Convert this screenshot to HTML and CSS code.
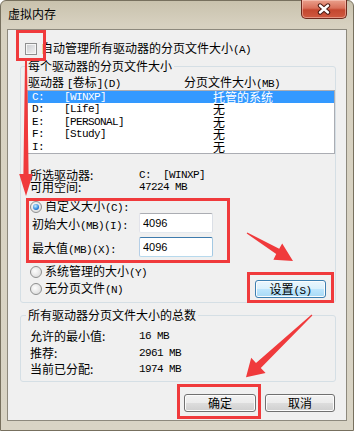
FILE: index.html
```html
<!DOCTYPE html>
<html lang="zh-CN">
<head>
    <meta charset="UTF-8">
    <meta name="viewport" content="width=device-width, initial-scale=1.0">
    <title>虚拟内存</title>

    <link rel="stylesheet" href="styles.css">
</head>
<body>
    <div class="window">
        <div class="titlebar">
            <span class="title">虚拟内存</span>
            <button class="close" title="关闭">
                <svg width="16" height="12" viewBox="0 0 16 12">
                    <path d="M4 2.5 L12 9.5 M12 2.5 L4 9.5" stroke="#4a1a12" stroke-width="4.4" stroke-linecap="round"/>
                    <path d="M4 2.5 L12 9.5 M12 2.5 L4 9.5" stroke="#fff" stroke-width="2.4" stroke-linecap="round"/>
                </svg>
            </button>
        </div>

        <div class="client">
            <label class="auto-row">
                <span class="checkbox"></span>
                <span>自动管理所有驱动器的分页文件大小<span class="en">(A)</span></span>
            </label>

            <fieldset class="group group-drive">
                <legend>每个驱动器的分页文件大小</legend>

                <div class="list-head">
                    <span class="col-drive">驱动器 <span class="en">[</span>卷标<span class="en">](D)</span></span>
                    <span>分页文件大小<span class="en">(MB)</span></span>
                </div>

                <ul class="drive-list">
                    <li class="selected"><span class="c-letter">C:</span><span class="c-label">[WINXP]</span><span>托管的系统</span></li>
                    <li><span class="c-letter">D:</span><span class="c-label">[Life]</span><span>无</span></li>
                    <li><span class="c-letter">E:</span><span class="c-label">[PERSONAL]</span><span>无</span></li>
                    <li><span class="c-letter">F:</span><span class="c-label">[Study]</span><span>无</span></li>
                    <li><span class="c-letter">I:</span><span class="c-label"></span><span>无</span></li>
                </ul>

                <div class="info-row first">
                    <span class="info-key">所选驱动器:</span>
                    <span class="en">C:  [WINXP]</span>
                </div>
                <div class="info-row">
                    <span class="info-key">可用空间:</span>
                    <span class="en">47224 MB</span>
                </div>

                <label class="radio-row custom-row">
                    <span class="radio checked"></span>
                    <span>自定义大小<span class="en">(C):</span></span>
                </label>
                <div class="size-row">
                    <span class="size-label">初始大小<span class="en">(MB)(I):</span></span>
                    <input class="size-input" type="text" value="4096">
                </div>
                <div class="size-row second">
                    <span class="size-label">最大值<span class="en">(MB)(X):</span></span>
                    <input class="size-input focus" type="text" value="4096">
                </div>

                <div class="mode-row">
                    <div class="mode-opts">
                        <label class="radio-row">
                            <span class="radio"></span>
                            <span>系统管理的大小<span class="en">(Y)</span></span>
                        </label>
                        <label class="radio-row second">
                            <span class="radio"></span>
                            <span>无分页文件<span class="en">(N)</span></span>
                        </label>
                    </div>
                    <button class="btn btn-set">设置<span class="en">(S)</span></button>
                </div>
            </fieldset>

            <fieldset class="group group-total">
                <legend>所有驱动器分页文件大小的总数</legend>

                <div class="total-row first">
                    <span class="info-key">允许的最小值:</span>
                    <span class="en">16 MB</span>
                </div>
                <div class="total-row">
                    <span class="info-key">推荐:</span>
                    <span class="en">2961 MB</span>
                </div>
                <div class="total-row">
                    <span class="info-key">当前已分配:</span>
                    <span class="en">1974 MB</span>
                </div>
            </fieldset>

            <div class="actions">
                <button class="btn btn-ok">确定</button>
                <button class="btn btn-cancel">取消</button>
            </div>
        </div>

        <!-- 标注: 红框和箭头 -->
        <svg class="annot" width="354" height="431" viewBox="0 0 354 431">
            <g fill="none" stroke="#f03a3c" stroke-width="3">
                <rect x="17.5" y="31.5" width="27" height="28"/>
                <rect x="27.5" y="199.5" width="201" height="62"/>
                <rect x="248.5" y="273.5" width="84" height="28"/>
                <rect x="178.5" y="385.5" width="81" height="32"/>
            </g>
            <g fill="#f03a3c">
                <polygon points="25,61 27,61 28.6,174 32.8,174 26,196 19.2,174 23.4,174"/>
                <polygon points="246.7,233.4 276.2,254.0 273.4,259.7 293,261 282.2,243.5 279.2,248.8 247.3,232.6"/>
                <polygon points="312.4,315.4 260.8,368.0 265.6,373.0 246,377.3 251.2,357.8 256.0,362.9 311.6,314.6"/>
            </g>
        </svg>
    </div>
</body>
</html>
```

FILE: styles.css
```css
body {
    margin: 0;
    font-family: "Noto Sans CJK SC", "Noto Sans", sans-serif;
    font-size: 12px;
    color: #000;
}

/* 창 프레임 */
.window {
    position: relative;
    width: 354px;
    height: 431px;
    box-sizing: border-box;
    border: 1px solid #77705e;
    border-radius: 6px 6px 0 0;
    padding: 0 6px 9px;
    background: linear-gradient(#c9c2ad, #d7d1c0 24px, #d9d4c5);
}

.titlebar {
    display: flex;
    justify-content: space-between;
    align-items: flex-start;
    height: 28px;
}

.title {
    margin: 5px 0 0 1px;
    line-height: 16px;
}

.close {
    display: flex;
    align-items: center;
    justify-content: center;
    width: 46px;
    height: 19px;
    margin-top: -1px;
    padding: 0;
    border: 1px solid #6e2a1e;
    border-top: none;
    border-radius: 0 0 5px 5px;
    background: linear-gradient(#eaa08c, #d9705a 45%, #c4472f 55%, #cf5a40);
    box-shadow: inset 0 0 0 1px rgba(255, 220, 210, 0.45);
}

.client {
    height: 392px;
    box-sizing: border-box;
    border: 1px solid #8d897d;
    background: #f0f0f0;
}

.en {
    font-family: "Liberation Mono", monospace;
    font-size: 11px;
    letter-spacing: -0.6px;
    white-space: pre;
}

.auto-row {
    display: flex;
    align-items: center;
    gap: 4px;
    height: 12px;
    line-height: 12px;
    margin: 13px 0 0 17px;
}

.checkbox {
    width: 12px;
    height: 12px;
    box-sizing: border-box;
    border: 1px solid #8e8f8f;
    background: linear-gradient(135deg, #c9cbce, #f4f4f4);
    box-shadow: inset 0 0 0 1px #f6f6f6;
}

/* 그룹 박스 */
.group {
    margin: 0 10px 0 12px;
    padding: 0;
    min-width: 0;
    border: 1px solid #d5dfe5;
    border-radius: 3px;
}

.group legend {
    margin-left: 5px;
    padding: 0 2px;
    line-height: 12px;
}

.group-drive {
    margin-top: 5px;
    padding-bottom: 4px;
}

.group-total {
    margin-top: 6px;
    padding-bottom: 3.5px;
}

.list-head {
    display: flex;
    height: 12px;
    line-height: 12px;
    margin: 4px 0 0 7px;
}

.col-drive {width: 156px;}

.drive-list {
    list-style: none;
    height: 62px;
    margin: 2px 0 0 6px;
    padding: 0;
    border: 1px solid #abadb3;
    background: #fff;
}

.drive-list li {
    display: flex;
    height: 12.4px;
    line-height: 12.4px;
    padding-left: 4px;
}

.drive-list .selected {
    background: #3399ff;
    color: #fff;
}

.c-letter,
.c-label {
    font-family: "Liberation Mono", monospace;
    font-size: 11px;
    letter-spacing: -0.6px;
}

.c-letter {width: 32px;}

.c-label {width: 149px;}

.info-row,
.total-row {
    display: flex;
    margin-left: 9px;
}

.info-row {
    height: 12px;
    line-height: 12px;
}

.info-row.first {margin-top: 15px;}

.total-row {
    height: 16.5px;
    line-height: 16.5px;
}

.total-row.first {margin-top: 7px;}

.info-key {width: 109px;}

.radio-row {
    display: flex;
    align-items: center;
    gap: 3px;
    height: 12px;
    line-height: 12px;
    margin-left: 9px;
}

.custom-row {margin-top: 8px;}

.radio {
    position: relative;
    width: 12px;
    height: 12px;
    box-sizing: border-box;
    border: 1px solid #8e8f8f;
    border-radius: 50%;
    background: radial-gradient(circle at 40% 40%, #fdfdfd, #d4d4d4);
}

.radio.checked::after {
    content: "";
    position: absolute;
    left: 2px;
    top: 2px;
    width: 6px;
    height: 6px;
    border-radius: 50%;
    background: radial-gradient(circle at 40% 35%, #c8f0ff, #2d84dc 60%, #1a4e9a);
}

.size-row {
    display: flex;
    align-items: center;
    height: 20px;
    margin-left: 11px;
}

.size-row.second {margin-top: 4px;}

.size-label {width: 107px;}

.size-input {
    width: 74px;
    height: 20px;
    box-sizing: border-box;
    margin: 0;
    padding: 0 0 0 3px;
    border: 1px solid #abadb3;
    border-color: #abadb3 #dbdfe6 #e3e9ef #e2e3ea;
    border-radius: 2px;
    background: #fff;
    font-family: "Liberation Sans", sans-serif;
    font-size: 11px;
    color: #000;
}

.size-input.focus {border-color: #3d7bad #a4c9e3 #b7d9ed #b5cfe7;}

.mode-row {
    display: flex;
    justify-content: space-between;
    margin: 9px 9px 0 0;
}

.mode-opts .second {margin-top: 5px;}

/* 버튼 */
.btn {
    height: 18px;
    box-sizing: border-box;
    padding: 0;
    border: 1px solid #707070;
    border-radius: 3px;
    background: linear-gradient(#f2f2f2, #ebebeb 50%, #dddddd 50%, #cfcfcf);
    box-shadow: inset 0 0 0 1px #fcfcfc;
    font: inherit;
    line-height: 16px;
    color: #000;
}

.btn-set {
    width: 71px;
    margin-top: 14px;
    border-color: #3c7fb1;
    background: linear-gradient(#eaf6fd, #d9f0fc 50%, #bee6fd 50%, #a7d9f5);
}

.actions {
    display: flex;
    justify-content: flex-end;
    gap: 9px;
    margin: 12px 11px 0 0;
}

.btn-ok {width: 72px;}

.btn-cancel {width: 70px;}

.annot {
    position: absolute;
    left: -1px;
    top: -1px;
    pointer-events: none;
}
```
